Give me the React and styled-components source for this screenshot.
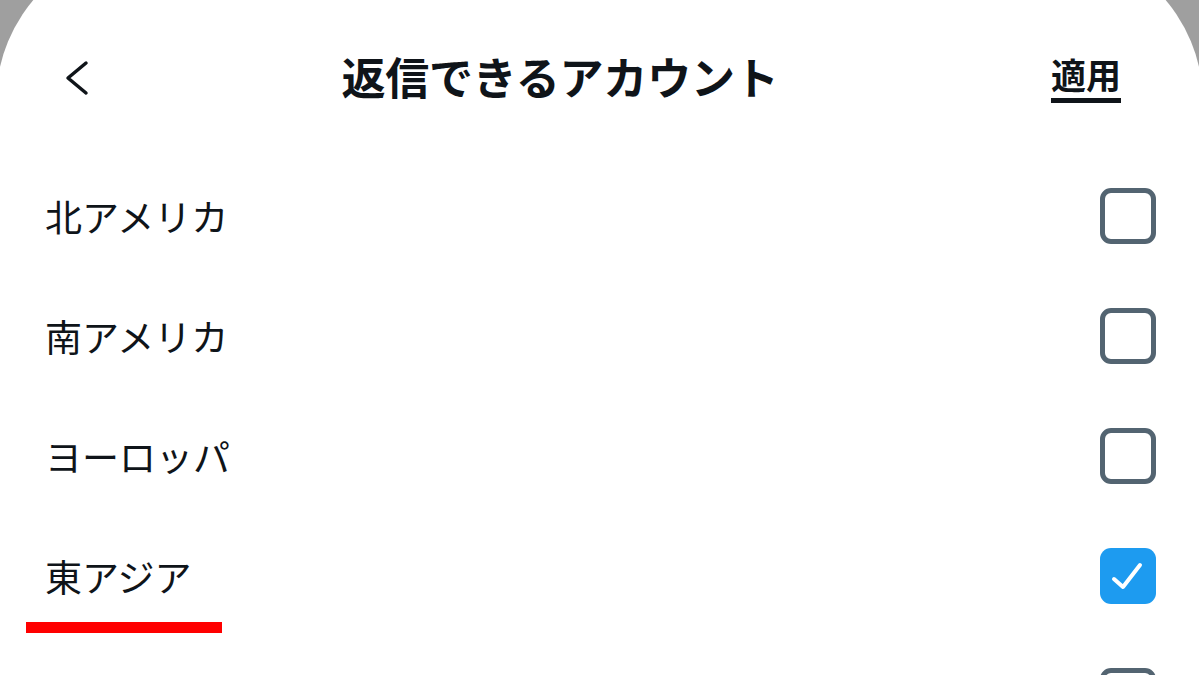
import styled, { createGlobalStyle } from 'styled-components';

const GlobalStyle = createGlobalStyle`
	html, body {
		margin: 0;
		padding: 0;
		overflow: hidden;
	}
	body {
		font-family: "Noto Sans CJK JP", "Noto Sans", sans-serif;
		color: #0f1419;
	}
`;

const Backdrop = styled.div`
	height: 100vh;
	background-color: #9f9f9f;
	overflow: hidden;
`;

const Sheet = styled.section`
	margin: -56px -4px 0;
	padding-top: 56px;
	min-height: 100vh;
	background-color: #ffffff;
	border-radius: 158px 158px 0 0;
`;

const Header = styled.header`
	display: flex;
	align-items: center;
	height: 156px;
	padding: 0 82px 0 51px;
	box-sizing: border-box;
`;

const BackButton = styled.button`
	display: flex;
	align-items: center;
	justify-content: center;
	width: 60px;
	height: 60px;
	padding: 0;
	border: none;
	background: none;
	color: #0f1419;
	cursor: pointer;
`;

const Title = styled.h1`
	flex: 1;
	margin: 0 38px 4px 0;
	font-size: 44px;
	font-weight: 700;
	line-height: 1;
	text-align: center;
	letter-spacing: -0.2px;
`;

const ApplyButton = styled.button`
	margin-bottom: 10px;
	padding: 0;
	border: none;
	background: none;
	font-family: inherit;
	font-size: 35px;
	font-weight: 700;
	line-height: 1;
	color: #0f1419;
	text-decoration: underline;
	text-decoration-thickness: 5px;
	text-underline-offset: 9px;
	cursor: pointer;
`;

const List = styled.ul`
	list-style: none;
	margin: 0;
	padding: 0;
`;

const Row = styled.li`
	display: flex;
	align-items: center;
	justify-content: space-between;
	height: 120px;
	padding: 0 47px 0 49px;
`;

const Label = styled.span`
	position: relative;
	font-size: 37px;
	font-weight: 400;
	line-height: 1;
	color: #0f1419;
	${({ $marked }) =>
		$marked &&
		`
		&::after {
			content: '';
			position: absolute;
			left: -19px;
			right: -30px;
			bottom: -38px;
			height: 11px;
			background-color: #ff0000;
		}
	`}
`;

const Box = styled.span`
	display: flex;
	align-items: center;
	justify-content: center;
	width: 56px;
	height: 56px;
	box-sizing: border-box;
	border-radius: 11px;
	border: ${({ $checked }) => ($checked ? 'none' : '5px solid #536471')};
	background-color: ${({ $checked }) => ($checked ? '#1d9bf0' : 'transparent')};
`;

const regions = [
	{ name: '北アメリカ', checked: false },
	{ name: '南アメリカ', checked: false },
	{ name: 'ヨーロッパ', checked: false },
	{ name: '東アジア', checked: true, marked: true },
	{ name: '', checked: false },
];

function Checkbox({ checked }) {
	return (
		<Box $checked={checked}>
			{checked && (
				<svg width="56" height="56" viewBox="0 0 56 56">
					<polyline
						points="14,31 23,39 40,17"
						fill="none"
						stroke="#ffffff"
						strokeWidth="4"
						strokeLinecap="round"
						strokeLinejoin="round"
					/>
				</svg>
			)}
		</Box>
	);
}

export default function App() {
	return (
		<>
			<GlobalStyle />
			<Backdrop>
				<Sheet>
					<Header>
						<BackButton aria-label="戻る">
							<svg width="30" height="36" viewBox="0 0 30 36">
								<polyline
									points="24,3 6,18 24,33"
									fill="none"
									stroke="currentColor"
									strokeWidth="3.5"
									strokeLinecap="round"
									strokeLinejoin="round"
								/>
							</svg>
						</BackButton>
						<Title>返信できるアカウント</Title>
						<ApplyButton>適用</ApplyButton>
					</Header>
					<List>
						{regions.map((item, i) => (
							<Row key={i}>
								<Label $marked={item.marked}>{item.name}</Label>
								<Checkbox checked={item.checked} />
							</Row>
						))}
					</List>
				</Sheet>
			</Backdrop>
		</>
	);
}
